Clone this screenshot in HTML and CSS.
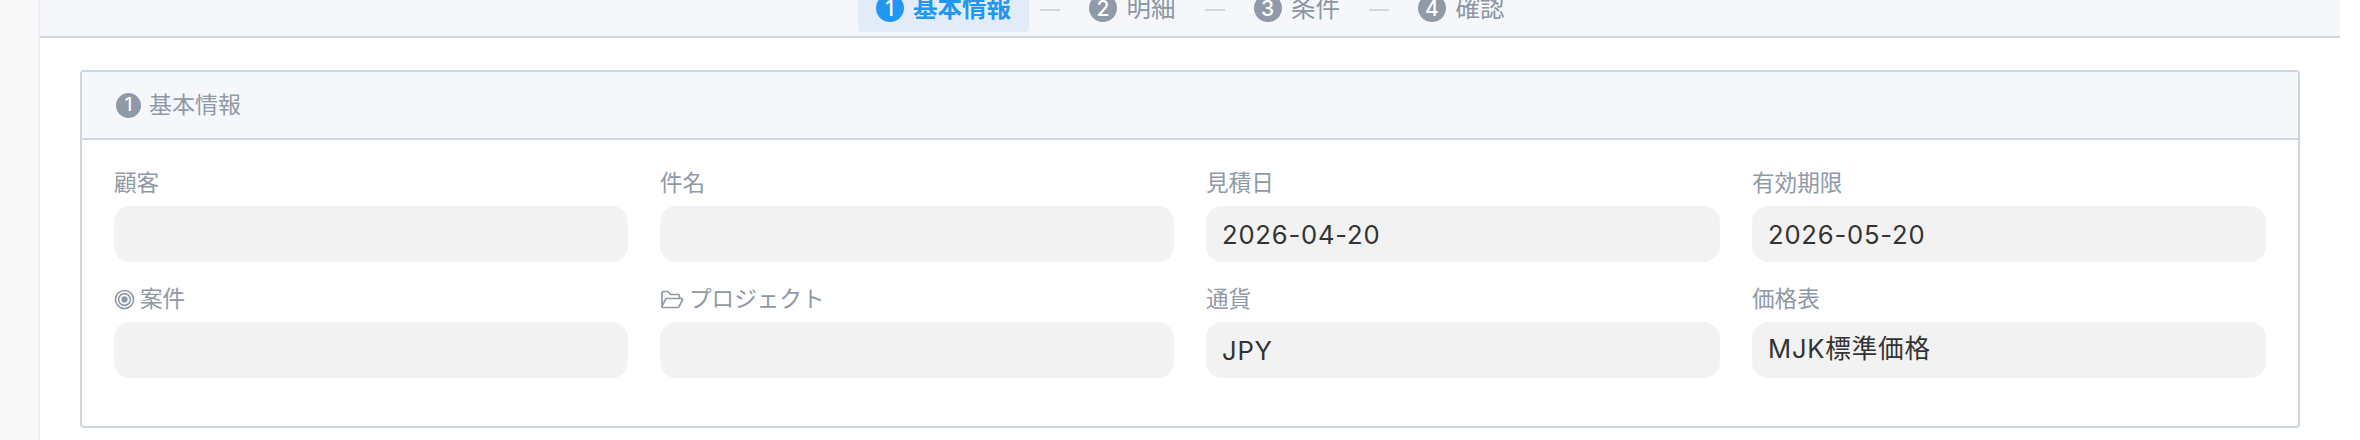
FILE: index.html
```html
<!DOCTYPE html>
<html lang="ja">
<head>
    <meta charset="UTF-8">
    <title>見積作成</title>
    <link rel="stylesheet" href="styles.css">
</head>
<body>
    <div class="layout">
        <aside class="side"></aside>
        <main class="main">
            <nav class="steps">
                <div class="step active"><span class="num">1</span>基本情報</div>
                <span class="dash"></span>
                <div class="step"><span class="num">2</span>明細</div>
                <span class="dash"></span>
                <div class="step"><span class="num">3</span>条件</div>
                <span class="dash"></span>
                <div class="step"><span class="num">4</span>確認</div>
            </nav>
            <section class="card">
                <div class="card-head"><span class="num">1</span>基本情報</div>
                <div class="form-grid">
                    <div class="field">
                        <label>顧客</label>
                        <div class="input"></div>
                    </div>
                    <div class="field">
                        <label>件名</label>
                        <div class="input"></div>
                    </div>
                    <div class="field">
                        <label>見積日</label>
                        <div class="input">2026-04-20</div>
                    </div>
                    <div class="field">
                        <label>有効期限</label>
                        <div class="input">2026-05-20</div>
                    </div>
                    <div class="field">
                        <label>
                            <svg class="icon" viewBox="0 0 20 20" fill="none" stroke="currentColor" stroke-width="1.5">
                                <circle cx="10" cy="10" r="8.6"/>
                                <circle cx="10" cy="10" r="5.6"/>
                                <circle cx="10" cy="10" r="3" fill="currentColor" stroke="none"/>
                            </svg>
                            案件
                        </label>
                        <div class="input"></div>
                    </div>
                    <div class="field">
                        <label>
                            <svg class="icon folder" viewBox="0 0 24 20" fill="none" stroke="currentColor" stroke-width="1.7" stroke-linejoin="round">
                                <path d="M2 17V3.500C2 2.700 2.700 2 3.500 2H8l2.500 3H18c.8 0 1.500.7 1.500 1.500V9"/>
                                <path d="M2 17L5.500 9.800C5.800 9.300 6.200 9 6.800 9H21.500C22.300 9 22.800 9.800 22.400 10.500L19 17.200C18.800 17.700 18.300 18 17.800 18H3C2.300 18 1.800 17.600 2 17Z"/>
                            </svg>
                            プロジェクト
                        </label>
                        <div class="input"></div>
                    </div>
                    <div class="field">
                        <label>通貨</label>
                        <div class="input">JPY</div>
                    </div>
                    <div class="field">
                        <label>価格表</label>
                        <div class="input jp">MJK標準価格</div>
                    </div>
                </div>
            </section>
        </main>
    </div>
</body>
</html>
```

FILE: styles.css
```css
/* General body styling */
body {
    font-family: Inter, "Noto Sans CJK JP", sans-serif;
    margin: 0;
    padding: 0;
    background-color: #ffffff;
    height: 440px;
    overflow: hidden;
}

.layout {
    display: flex;
    height: 440px;
}

.side {
    width: 38px;
    background-color: #f8f8f8;
    border-right: 2px solid #eeeeee;
}

.main {
    width: 2300px;
}

/* Step bar */
.steps {
    height: 36px;
    display: flex;
    align-items: flex-end;
    justify-content: center;
    background-color: #f5f7fa;
    border-bottom: 2px solid #d0d7de;
    font-size: 24.5px;
    color: #8c96a3;
}

.step {
    height: 48px;
    display: flex;
    align-items: center;
    gap: 9.5px;
    padding: 0 18px;
    border-radius: 4px;
    margin-bottom: 4px;
    flex-shrink: 0;
    line-height: 1;
}

.step.active {
    background-color: #e2ecf8;
    color: #2196f3;
    font-weight: 700;
}

.dash {
    width: 20px;
    height: 2px;
    margin: 0 11px 25px;
    background-color: #d0d7de;
}

.num {
    width: 28px;
    height: 28px;
    border-radius: 50%;
    display: inline-flex;
    align-items: center;
    justify-content: center;
    background-color: #8f99a8;
    color: #ffffff;
    font-size: 21px;
    font-weight: 500;
}

.step.active .num {
    background-color: #2196f3;
}

/* Card */
.card {
    margin: 32px 40px 0;
    height: 358px;
    box-sizing: border-box;
    border: 2px solid #ced6dd;
    border-radius: 4px;
}

.card-head {
    height: 66px;
    box-sizing: content-box;
    display: flex;
    align-items: center;
    gap: 8px;
    padding-left: 34px;
    background-color: #f5f7fa;
    border-bottom: 2px solid #d0d7de;
    font-size: 23px;
    line-height: 1;
    color: #8f99a8;
}

.card-head .num {
    width: 25px;
    height: 25px;
    font-size: 18px;
}

/* Form */
.form-grid {
    display: grid;
    grid-template-columns: repeat(4, 1fr);
    gap: 18px 32px;
    padding: 24px 32px 0;
}

.field label {
    display: flex;
    align-items: center;
    gap: 5px;
    height: 42px;
    box-sizing: border-box;
    padding-bottom: 4px;
    font-size: 22.6px;
    line-height: 1;
    color: #8f99a8;
}

.icon {
    width: 21px;
    height: 21px;
}

.icon.folder {
    width: 24px;
}

.input {
    height: 56px;
    line-height: 58px;
    box-sizing: border-box;
    padding: 0 16px;
    border-radius: 16px;
    background-color: #f2f2f2;
    color: #333333;
    font-size: 25.6px;
    letter-spacing: 0.8px;
}

.input.jp {
    line-height: 53px;
}
```
